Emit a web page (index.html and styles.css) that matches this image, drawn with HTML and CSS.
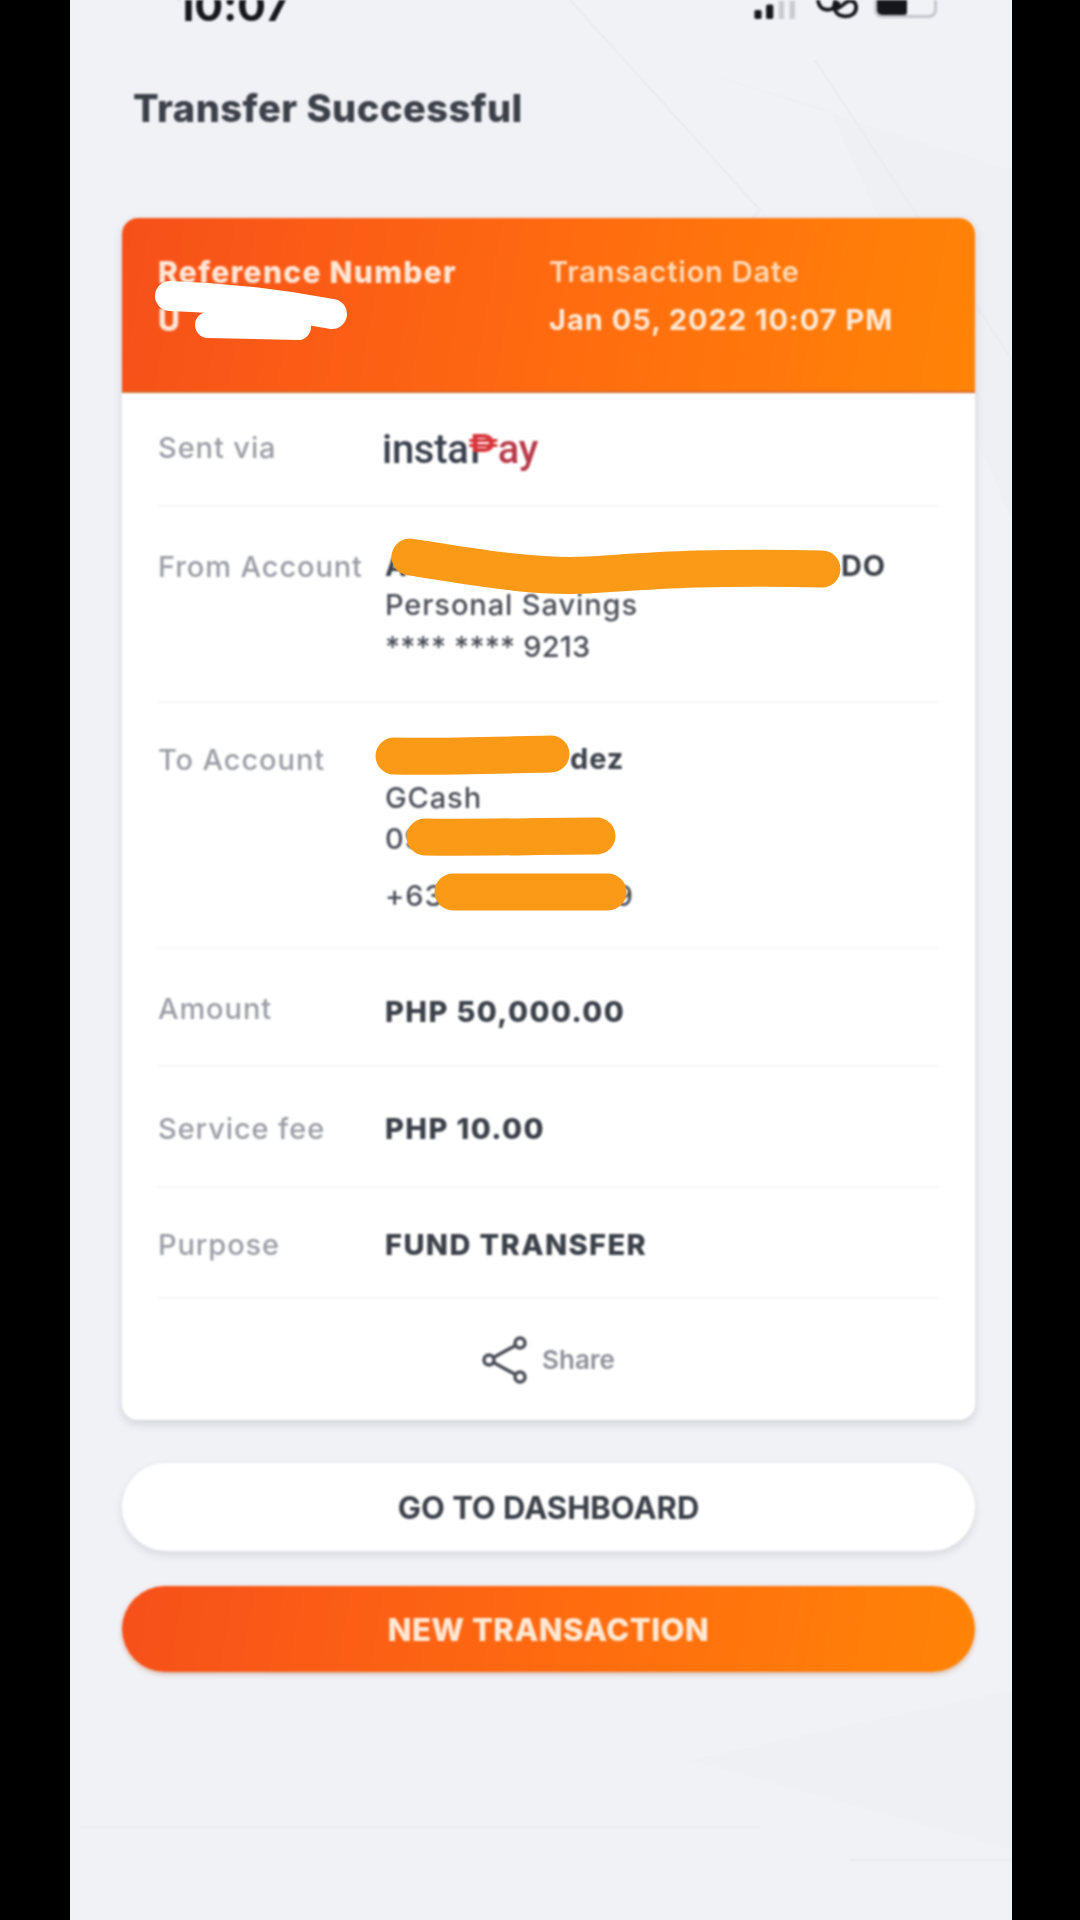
FILE: index.html
```html
<!DOCTYPE html>
<html lang="en">
<head>
<meta charset="utf-8">
<title>Transfer Successful</title>
<link rel="stylesheet" href="styles.css">
</head>
<body>
<main class="phone">
  <svg class="backdrop" viewBox="0 0 942 1920" aria-hidden="true">
    <path class="facet" d="M590 60 L942 170 L942 520 L760 110 Z"/>
    <path class="facet-line" d="M500 0 L690 210 L610 300 M745 60 L942 360"/>
    <path class="facet" d="M620 1760 L942 1690 L942 1850 Z"/>
    <path class="facet-line" d="M10 1827 L690 1827 M780 1860 L942 1860"/>
  </svg>
  <div class="content">
    <header class="status">
      <span class="time">10:07</span>
      <div class="status-icons">
        <svg class="signal" viewBox="0 0 48 20"><rect x="0" y="10" width="8" height="10" rx="2"/><rect x="13" y="4" width="8" height="16" rx="2"/><rect class="dim" x="27" y="0" width="6" height="20"/><rect class="dim" x="39" y="0" width="6" height="20"/></svg>
        <svg class="link" viewBox="0 0 46 20"><path d="M3 0 C4 9 10 11 16 10 C20 9 22 4 26 3 M22 0 C18 6 20 16 30 17 C38 18 44 14 43 6 C42 0 36 0 32 3 C28 6 24 10 20 10"/></svg>
        <div class="battery"><div class="battery-fill"></div></div>
      </div>
    </header>
    <h1 class="title">Transfer Successful</h1>
    <section class="card">
      <div class="card-head">
        <div class="head-col head-ref">
          <div class="head-strong">Reference Number</div>
          <div class="head-strong">U</div>
        </div>
        <div class="head-col">
          <div class="head-soft">Transaction Date</div>
          <div class="head-date">Jan 05, 2022 10:07 PM</div>
        </div>
      </div>
      <div class="row row-via">
        <div class="label">Sent via</div>
        <div class="logo">insta<span class="peso">₱</span><span class="logo-ay">ay</span></div>
      </div>
      <div class="row row-from">
        <div class="label">From Account</div>
        <div class="value">
          <div class="strong masked-from"><span>A</span><span>DO</span></div>
          <div>Personal Savings</div>
          <div class="account-digits">**** **** 9213</div>
        </div>
      </div>
      <div class="row row-to">
        <div class="label">To Account</div>
        <div class="value">
          <div class="strong masked-to"><span>dez</span></div>
          <div>GCash</div>
          <div class="mobile-line">09</div>
          <div class="masked-phone"><span>+63</span><span>9</span></div>
        </div>
      </div>
      <div class="row row-amount">
        <div class="label">Amount</div>
        <div class="value strong-wide amount-value">PHP 50,000.00</div>
      </div>
      <div class="row row-fee">
        <div class="label">Service fee</div>
        <div class="value strong-wide">PHP 10.00</div>
      </div>
      <div class="row row-purpose">
        <div class="label">Purpose</div>
        <div class="value strong-wide">FUND TRANSFER</div>
      </div>
      <div class="share">
        <svg class="share-icon" viewBox="0 0 46 48"><circle cx="7" cy="24" r="5"/><circle cx="38" cy="7" r="5"/><circle cx="38" cy="41" r="5"/><path d="M11.5 21.5 L33.5 9.5 M11.5 26.5 L33.5 38.5"/></svg>
        <span>Share</span>
      </div>
    </section>
    <button class="btn btn-light">GO TO DASHBOARD</button>
    <button class="btn btn-orange">NEW TRANSACTION</button>
  </div>
</main>
<svg class="redactions" viewBox="0 0 1080 1920" aria-hidden="true">
  <path class="mark-white" d="M170 296 C230 298 290 306 332 314" />
  <path class="mark-white-b" d="M208 325 L298 327" />
  <path class="mark-orange" d="M410 557 C470 566 530 578 588 575 C640 572 700 566 822 569"/>
  <path class="mark-orange" d="M394 756 C440 757 500 755 551 754"/>
  <path class="mark-orange" d="M425 837 C480 838 540 836 597 836"/>
  <path class="mark-orange" d="M453 892 L608 892"/>
</svg>
</body>
</html>
```
FILE: styles.css
```css
* { box-sizing: border-box; }
html, body { margin: 0; height: 100%; }
body {
  background: #000;
  font-family: Inter, "Liberation Sans", sans-serif;
  overflow: hidden;
  position: relative;
  width: 1080px;
  height: 1920px;
}
.phone {
  position: relative;
  margin-left: 70px;
  width: 942px;
  height: 1920px;
  background: #f1f2f6;
  overflow: hidden;
}
.backdrop { position: absolute; inset: 0; width: 942px; height: 1920px; }
.facet { fill: #eff0f4; }
.facet-line { fill: none; stroke: #ecedf1; stroke-width: 3; }
.content {
  position: relative;
  padding: 0 37px 0 52px;
  filter: blur(0.9px);
}
.status {
  height: 26px;
  overflow: hidden;
  display: flex;
  align-items: flex-end;
  justify-content: space-between;
  padding: 0 0 0 54px;
  margin-right: 38px;
}
.time {
  font-size: 43px;
  line-height: 42px;
  font-weight: 700;
  letter-spacing: -.3px;
  color: #15171c;
  flex: none;
}
.status-icons { display: flex; align-items: flex-end; gap: 14px; height: 18px; margin-bottom: 7px; }
.signal { width: 48px; height: 18px; fill: #15171c; }
.signal .dim { fill: #c9cad0; }
.link { width: 46px; height: 19px; fill: none; stroke: #15171c; stroke-width: 4; }
.battery {
  width: 63px;
  height: 30px;
  border: 3px solid #c5c6cc;
  border-radius: 8px;
  overflow: hidden;
  margin-bottom: 1px;
}
.battery-fill { width: 30px; height: 100%; background: #15171c; border-radius: 3px; }
.title {
  margin: 60px 0 0;
  padding-left: 11px;
  font-size: 38px;
  line-height: 44px;
  font-weight: 800;
  letter-spacing: .5px;
  color: #3c4049;
}
.card {
  margin-top: 88px;
  width: 853px;
  background: #fff;
  border-radius: 16px;
  box-shadow: 0 4px 10px rgba(60, 65, 80, .18);
  overflow: hidden;
}
.card-head {
  height: 175px;
  padding: 30px 36px 0;
  display: flex;
  background: linear-gradient(100deg, #f6501a 0%, #ff6a10 50%, #ff8407 100%);
  border-bottom: 2px solid #d86a2c;
  color: #fff;
  font-size: 29px;
  line-height: 48px;
}
.head-col { display: flex; flex-direction: column; }
.head-ref { width: 391px; flex: none; }
.head-strong { font-size: 30px; font-weight: 800; color: #ffe6d6; letter-spacing: 1.3px; }
.head-soft { font-weight: 600; color: #ffd9b8; letter-spacing: .8px; }
.head-date { font-weight: 700; color: #ffe8d4; letter-spacing: 1px; }
.row {
  margin: 0 36px;
  display: flex;
  border-bottom: 2px solid #f6f6f8;
  font-size: 29px;
  line-height: 40px;
}
.label { width: 227px; flex: none; color: #9a9da4; font-weight: 500; letter-spacing: .9px; }
.value { color: #4a4e57; font-weight: 500; letter-spacing: .9px; }
.strong { font-weight: 700; color: #3c4049; line-height: 38px; }
.strong-wide { font-weight: 800; color: #3c4049; letter-spacing: 1.4px; }
.amount-value { padding-top: 3px; }
.account-digits { letter-spacing: .2px; margin-top: 2px; }
.mobile-line { margin-top: 1px; }
.row-via { height: 114px; padding-top: 35px; }
.row-from { height: 196px; padding-top: 40px; }
.row-to { height: 246px; padding-top: 37px; }
.row-amount { height: 118px; padding-top: 40px; }
.row-fee { height: 121px; padding-top: 42px; }
.row-purpose { height: 111px; padding-top: 37px; }
.masked-from { display: flex; justify-content: space-between; width: 501px; }
.masked-to { padding-left: 185px; }
.masked-phone { display: flex; justify-content: space-between; width: 249px; margin-top: 17px; }
.logo {
  font-size: 40px;
  line-height: 40px;
  font-weight: 500;
  color: #3a3f4d;
  font-family: Roboto, sans-serif;
  letter-spacing: -.3px;
  margin: 2px 0 0 -3px;
}
.peso {
  background: linear-gradient(180deg, #d8353a 0 55%, #3a3f4d 55% 100%);
  -webkit-background-clip: text;
  background-clip: text;
  color: transparent;
}
.logo-ay { color: #b83a4a; }
.share {
  height: 121px;
  display: flex;
  align-items: center;
  justify-content: center;
  gap: 14px;
  color: #8e9199;
  font-size: 26px;
  font-weight: 600;
}
.share-icon { width: 46px; height: 48px; fill: none; stroke: #4a4e57; stroke-width: 3.5; }
.btn {
  display: block;
  width: 853px;
  border: 0;
  border-radius: 44px;
  font-family: inherit;
  font-weight: 700;
  font-size: 31px;
}
.btn-light {
  margin-top: 43px;
  height: 88px;
  background: #fff;
  color: #3c4049;
  box-shadow: 0 4px 8px rgba(60, 65, 80, .14);
}
.btn-orange {
  margin-top: 35px;
  height: 86px;
  color: #ffe8d4;
  font-weight: 800;
  letter-spacing: .5px;
  background: linear-gradient(100deg, #f6501a 0%, #ff6a10 50%, #ff8407 100%);
  box-shadow: 0 2px 5px rgba(160, 70, 20, .35);
}
.redactions { position: absolute; left: 0; top: 0; width: 1080px; height: 1920px; pointer-events: none; }
.mark-orange { fill: none; stroke: #fb9a17; stroke-width: 37; stroke-linecap: round; }
.mark-white { fill: none; stroke: #fff; stroke-width: 30; stroke-linecap: round; }
.mark-white-b { fill: none; stroke: #fff; stroke-width: 26; stroke-linecap: round; }
```
